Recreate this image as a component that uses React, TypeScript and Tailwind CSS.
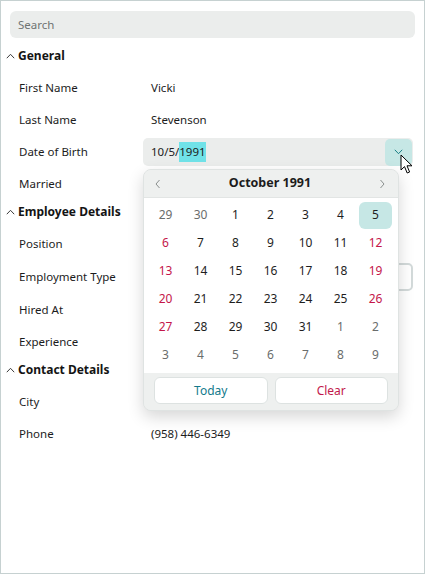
import React from "react";

type Field = { label: string; value?: string; kind?: "text" | "date" | "input" };
type Group = { title: string; fields: Field[] };

const groups: Group[] = [
    {
        title: "General",
        fields: [
            { label: "First Name", value: "Vicki" },
            { label: "Last Name", value: "Stevenson" },
            { label: "Date of Birth", kind: "date" },
            { label: "Married" },
        ],
    },
    {
        title: "Employee Details",
        fields: [
            { label: "Position" },
            { label: "Employment Type", kind: "input" },
            { label: "Hired At" },
            { label: "Experience" },
        ],
    },
    {
        title: "Contact Details",
        fields: [
            { label: "City" },
            { label: "Phone", value: "(958) 446-6349" },
        ],
    },
];

// 6 weeks, Sunday first; m = day belongs to another month
const weeks: { d: number; m?: boolean }[][] = [
    [{ d: 29, m: true }, { d: 30, m: true }, { d: 1 }, { d: 2 }, { d: 3 }, { d: 4 }, { d: 5 }],
    [{ d: 6 }, { d: 7 }, { d: 8 }, { d: 9 }, { d: 10 }, { d: 11 }, { d: 12 }],
    [{ d: 13 }, { d: 14 }, { d: 15 }, { d: 16 }, { d: 17 }, { d: 18 }, { d: 19 }],
    [{ d: 20 }, { d: 21 }, { d: 22 }, { d: 23 }, { d: 24 }, { d: 25 }, { d: 26 }],
    [{ d: 27 }, { d: 28 }, { d: 29 }, { d: 30 }, { d: 31 }, { d: 1, m: true }, { d: 2, m: true }],
    [{ d: 3, m: true }, { d: 4, m: true }, { d: 5, m: true }, { d: 6, m: true }, { d: 7, m: true }, { d: 8, m: true }, { d: 9, m: true }],
];

function ChevronUp() {
    return (
        <svg width="9" height="6" viewBox="0 0 9 6" fill="none">
            <path d="M0.8 5.2 L4.5 1.3 L8.2 5.2" stroke="#3a3a3a" strokeWidth="1" />
        </svg>
    );
}

function Calendar() {
    return (
        <div className="absolute left-[142px] top-[168px] w-[256px] h-[242px] rounded-[8px] border border-[#dfe3e2] bg-[#eef0ef] shadow-[0_6px_16px_rgba(0,0,0,0.16)] overflow-hidden flex flex-col">
            <div className="h-[29px] flex items-center justify-between pl-[10px] pr-[12px] bg-[#eef0ef] border-b border-[#e2e5e4]">
                <svg width="8" height="10" viewBox="0 0 8 10" fill="none">
                    <path d="M5.5 1 L2 5 L5.5 9" stroke="#8a8f8e" strokeWidth="1" />
                </svg>
                <span className="text-[12.5px] font-bold text-[#1c1c1c]">October 1991</span>
                <svg width="8" height="10" viewBox="0 0 8 10" fill="none">
                    <path d="M2.5 1 L6 5 L2.5 9" stroke="#8a8f8e" strokeWidth="1" />
                </svg>
            </div>
            <div className="bg-white pt-[3px] pb-[4px] pl-[4px] flex-1">
                <div className="grid grid-cols-[repeat(7,35px)] auto-rows-[28px]">
                    {weeks.map((week, wi) =>
                        week.map((c, ci) => {
                            const selected = !c.m && c.d === 5;
                            const weekend = ci === 0 || ci === 6;
                            const color = selected
                                ? "text-[#1e1e1e]"
                                : c.m
                                  ? "text-[#6a6d6c]"
                                  : weekend
                                    ? "text-[#c4164a]"
                                    : "text-[#1e1e1e]";
                            return (
                                <div key={wi + "-" + ci} className="flex items-center justify-center">
                                    <div
                                        className={
                                            "w-[33px] h-[27px] flex items-center justify-center rounded-[6px] text-[12px] " +
                                            color +
                                            (selected ? " bg-[#c6e7e5]" : "")
                                        }
                                    >
                                        {c.d}
                                    </div>
                                </div>
                            );
                        })
                    )}
                </div>
            </div>
            <div className="h-[38px] flex gap-[7px] px-[10px] pt-[4px] pb-[6px] bg-[#eef0ef]">
                <button className="flex-1 h-[27px] rounded-[6px] bg-white border border-[#dde2e1] text-[12px] text-[#137a8c]">
                    Today
                </button>
                <button className="flex-1 h-[27px] rounded-[6px] bg-white border border-[#dde2e1] text-[12px] text-[#c2184b]">
                    Clear
                </button>
            </div>
        </div>
    );
}

function Cursor() {
    return (
        <svg className="absolute left-[399px] top-[153px]" width="14" height="21" viewBox="0 0 14 21" fill="none">
            <path
                d="M1 1 L1 16 L4.5 12.6 L7.2 19 L9.6 18 L7 11.8 L12 11.8 Z"
                fill="white"
                stroke="black"
                strokeWidth="1"
                strokeLinejoin="round"
            />
        </svg>
    );
}

function FieldRow({ field }: { field: Field }) {
    const tall = field.kind === "input";
    return (
        <div
            className={
                "flex items-center pl-[18px] pr-[11px] text-[11.5px] leading-[16px] text-[#1c1c1c] " +
                (tall ? "h-[34px]" : "h-[32px]")
            }
        >
            <div className="w-[124px] shrink-0">{field.label}</div>
            <div className="flex-1 min-w-0">
                {field.kind === "date" ? (
                    <div className="h-[28px] rounded-[5px] bg-[#ebedec] flex items-center pl-[8px] pr-[1px]">
                        <span className="flex-1 flex items-center">
                            10/5/<span className="bg-[#70e2e8] h-[20px] flex items-center">1991</span>
                        </span>
                        <div className="w-[27px] h-[27px] rounded-[5px] bg-[#c6e7e5] flex items-center justify-center">
                            <svg width="9" height="6" viewBox="0 0 9 6" fill="none">
                                <path d="M0.8 0.8 L4.5 4.7 L8.2 0.8" stroke="#1a7f84" strokeWidth="1" />
                            </svg>
                        </div>
                    </div>
                ) : field.kind === "input" ? (
                    <div className="h-[28px] rounded-[5px] border-2 border-[#d3dada] bg-white" />
                ) : (
                    <div className="pl-[8px]">{field.value}</div>
                )}
            </div>
        </div>
    );
}

export default function App() {
    return (
        <div
            className="relative w-[425px] h-[574px] border border-[#c6d1d1] bg-white overflow-hidden"
            style={{ fontFamily: '"Noto Sans", "Open Sans", sans-serif' }}
        >
            <div className="mx-[9px] mt-[10px] h-[27px] rounded-[6px] bg-[#ebedec] flex items-center pl-[8px] text-[11.5px] text-[#6f7473]">
                Search
            </div>
            <div className="mt-[6px]">
                {groups.map((g) => (
                    <div key={g.title}>
                        <div className="h-[28px] pb-[4px] flex items-center gap-[3px] pl-[5px]">
                            <ChevronUp />
                            <span className="text-[12px] font-bold text-[#141414]">{g.title}</span>
                        </div>
                        {g.fields.map((f) => (
                            <FieldRow key={f.label} field={f} />
                        ))}
                    </div>
                ))}
            </div>
            <Calendar />
            <Cursor />
        </div>
    );
}
